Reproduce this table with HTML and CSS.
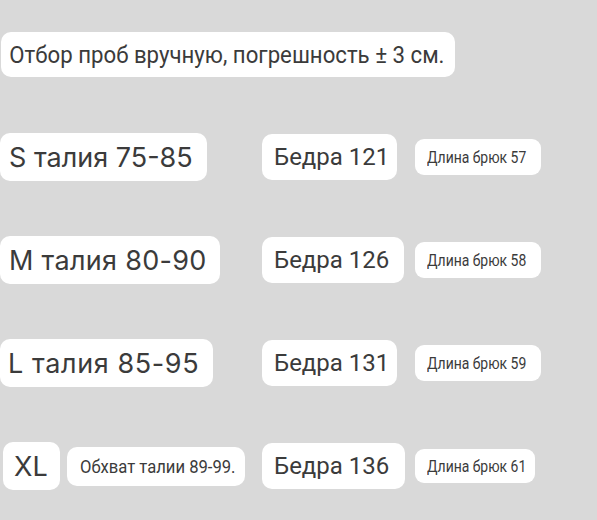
FILE: index.html
```
<!DOCTYPE html>
<html lang="ru">
<head>
<meta charset="utf-8">
<link rel="stylesheet" href="styles.css">
</head>
<body>
<div class="page">
  <div class="note"><span class="cond note-text">Отбор проб вручную, погрешность ± 3 см.</span></div>
  <div class="rows">
    <div class="row">
      <div class="size s-box">S талия 75-85</div>
      <div class="hip w1">Бедра 121</div>
      <div class="len"><span class="cond">Длина брюк 57</span></div>
    </div>
    <div class="row">
      <div class="size m-box">M талия 80-90</div>
      <div class="hip w2">Бедра 126</div>
      <div class="len"><span class="cond">Длина брюк 58</span></div>
    </div>
    <div class="row">
      <div class="size l-box">L талия 85-95</div>
      <div class="hip w1">Бедра 131</div>
      <div class="len"><span class="cond">Длина брюк 59</span></div>
    </div>
    <div class="row">
      <div class="first">
        <div class="size xl-box">XL</div>
        <div class="waist"><span class="cond">Обхват талии 89-99.</span></div>
      </div>
      <div class="hip w3">Бедра 136</div>
      <div class="len len-short"><span class="cond">Длина брюк 61</span></div>
    </div>
  </div>
</div>
</body>
</html>
```
FILE: styles.css
```
html, body {
  margin: 0;
  padding: 0;
}
body {
  background: #d9d9d9;
  color: #3b3b3b;
  font-family: Roboto, "Noto Sans", sans-serif;
  width: 597px;
  height: 520px;
  overflow: hidden;
}
.page {
  padding-top: 32px;
}
.note {
  width: 454px;
  height: 45px;
  margin-left: 1px;
  background: #fff;
  border-radius: 10px;
  display: flex;
  align-items: center;
  overflow: hidden;
}
.cond {
  display: inline-block;
  transform-origin: left center;
  white-space: nowrap;
}
.note-text {
  font-size: 24px;
  padding-left: 9px;
  transform: scaleX(0.925);
}
.rows {
  margin-top: 56px;
  display: flex;
  flex-direction: column;
  gap: 55px;
}
.row {
  display: grid;
  grid-template-columns: 262px 153px auto;
  align-items: center;
  height: 48px;
}
.size {
  background: #fff;
  border-radius: 10px;
  height: 48px;
  display: flex;
  align-items: center;
  font-family: Inter, sans-serif;
  font-size: 27px;
  padding-left: 9px;
  box-sizing: border-box;
}
.s-box { width: 207px; }
.m-box { width: 220px; letter-spacing: 0.3px; }
.l-box { width: 213px; letter-spacing: 0.6px; padding-left: 8px; }
.first {
  display: flex;
  align-items: center;
  gap: 7px;
}
.xl-box {
  width: 57px;
  margin-left: 3px;
  padding-left: 11px;
}
.waist {
  width: 178px;
  height: 39px;
  background: #fff;
  border-radius: 10px;
  display: flex;
  align-items: center;
  padding-left: 13px;
  box-sizing: border-box;
  font-size: 19px;
}
.waist .cond { transform: scaleX(0.875); }
.hip {
  background: #fff;
  border-radius: 10px;
  height: 46px;
  display: flex;
  align-items: center;
  padding-left: 12px;
  box-sizing: border-box;
  font-size: 24px;
}
.w1 { width: 135px; }
.w2 { width: 142px; }
.w3 { width: 143px; }
.len {
  width: 126px;
  height: 36px;
  background: #fff;
  border-radius: 9px;
  display: flex;
  align-items: center;
  padding-left: 12px;
  box-sizing: border-box;
  font-size: 17px;
}
.len .cond { transform: scaleX(0.82); }
.len-short { width: 120px; height: 34px; }
```
